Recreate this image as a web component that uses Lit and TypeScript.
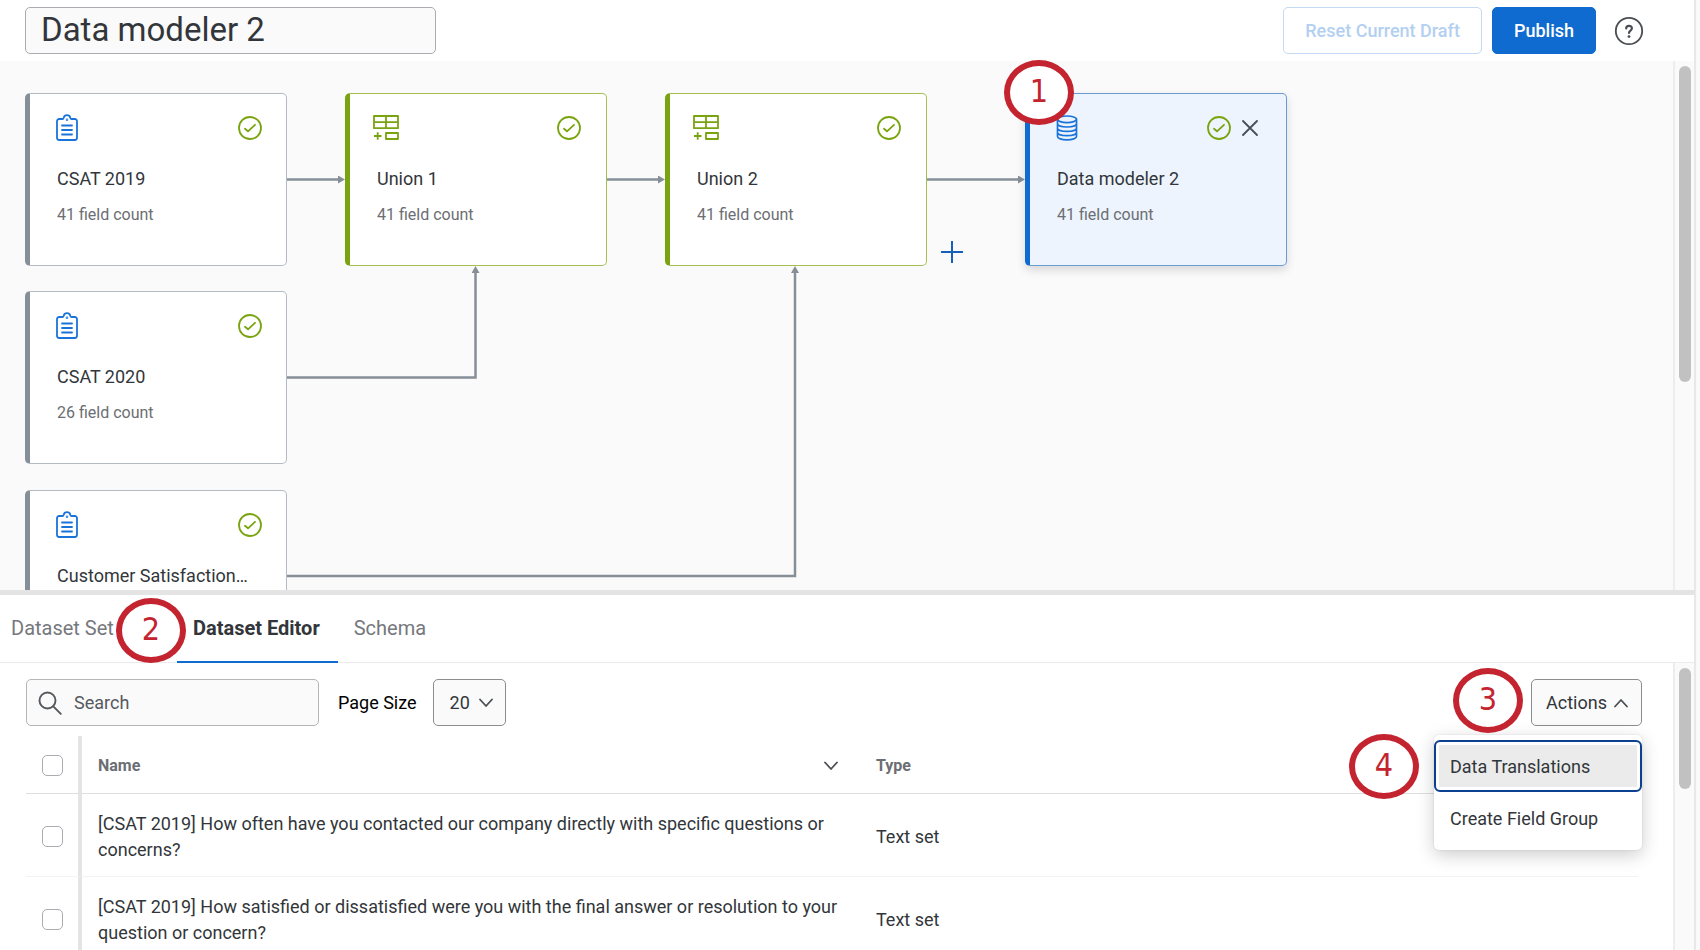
import { LitElement, html, css, svg, nothing } from "lit";
import { customElement, property, state } from "lit/decorators.js";
import { classMap } from "lit/directives/class-map.js";
import { styleMap } from "lit/directives/style-map.js";

type NodeKind = "survey" | "union" | "output";

interface FlowNode {
  name: string;
  fields: number;
  kind: NodeKind;
  x: number;
  y: number;
}

const NODES: FlowNode[] = [
  { name: "CSAT 2019", fields: 41, kind: "survey", x: 25, y: 32 },
  { name: "CSAT 2020", fields: 26, kind: "survey", x: 25, y: 230 },
  { name: "Customer Satisfaction…", fields: 41, kind: "survey", x: 25, y: 429 },
  { name: "Union 1", fields: 41, kind: "union", x: 345, y: 32 },
  { name: "Union 2", fields: 41, kind: "union", x: 665, y: 32 },
  { name: "Data modeler 2", fields: 41, kind: "output", x: 1025, y: 32 },
];

const LINKS = [
  "M287 118.500H340",
  "M607 118.500H660",
  "M927 118.500H1020",
  "M287 316.500H475.500V210",
  "M287 515H795V210",
];

const ROWS = [
  {
    name: "[CSAT 2019] How often have you contacted our company directly with specific questions or concerns?",
    type: "Text set",
  },
  {
    name: "[CSAT 2019] How satisfied or dissatisfied were you with the final answer or resolution to your question or concern?",
    type: "Text set",
  },
];

const surveyIcon = svg`<svg width="24" height="28" viewBox="0 0 24 28" fill="none" stroke="#1a73d9" stroke-width="1.8" stroke-linecap="round" stroke-linejoin="round" aria-hidden="true">
  <path d="M7.500 5H4.200A2.200 2.200 0 0 0 2 7.200V23.800A2.200 2.200 0 0 0 4.200 26H19.800A2.200 2.200 0 0 0 22 23.800V7.200A2.200 2.200 0 0 0 19.800 5H16.500C15.800 5 15.500 4.500 15.300 3.800A3.400 3.400 0 0 0 8.700 3.800C8.500 4.500 8.200 5 7.500 5Z"/>
  <path d="M7 11.500H17M7 16H17M7 20.500H17"/><circle cx="12" cy="5.800" r=".4"/></svg>`;

const unionIcon = svg`<svg width="26" height="28" viewBox="0 0 26 28" fill="none" stroke="#7aa310" stroke-width="1.8" stroke-linejoin="round" aria-hidden="true">
  <path d="M1 2H25V14.200H1ZM13 2V14.200M1 8.100H25M13 19H25V25H13ZM4.700 18.200V25.800M1 22H8.500"/></svg>`;

const outputIcon = svg`<svg width="22" height="28" viewBox="0 0 22 28" fill="none" stroke="#1a73d9" stroke-width="1.7" aria-hidden="true">
  <ellipse cx="11" cy="5.300" rx="9.500" ry="3.300"/>
  <path d="M1.500 5.300V22.500C1.500 24.300 5.700 25.800 11 25.800S20.500 24.300 20.500 22.500V5.300M1.500 9.800C1.500 11.600 5.700 13 11 13S20.500 11.600 20.500 9.800M1.500 14.200C1.500 16 5.700 17.400 11 17.400S20.500 16 20.500 14.200M1.500 18.500C1.500 20.300 5.700 21.700 11 21.700S20.500 20.300 20.500 18.500"/></svg>`;

const checkIcon = svg`<svg width="24" height="24" viewBox="0 0 24 24" fill="none" stroke="#7aa310" stroke-width="1.8" stroke-linecap="round" stroke-linejoin="round" role="img" aria-label="Valid">
  <circle cx="12" cy="12" r="11"/><path d="M7 12.800 10 15.300 17 8.800"/></svg>`;

const chevron = (up = false) => svg`<svg class="chev" width="16" height="10" viewBox="0 0 16 10" fill="none" stroke="#4a4e53" stroke-width="1.8" stroke-linecap="round" stroke-linejoin="round" aria-hidden="true">
  <path d=${up ? "M2 8.500 8 2 14 8.500" : "M2 1.500 8 8 14 1.500"}/></svg>`;

@customElement("flow-node")
class FlowNodeCard extends LitElement {
  @property({ attribute: false }) node!: FlowNode;

  static styles = css`
    :host { display: block; }
    .card {
      box-sizing: border-box;
      width: 262px;
      height: 173px;
      padding: 20px 24px 0 27px;
      border: 1px solid #b4bac1;
      border-left: 5px solid #868e98;
      border-radius: 5px;
      background: #fff;
    }
    .union { padding-right: 25px; border-color: #a3c050; border-left-color: #7aa310; }
    .output {
      border-color: #6a9bd1;
      border-left-color: #0f6bd0;
      background: #edf4fd;
      box-shadow: 0 4px 10px rgba(0, 0, 0, 0.14);
    }
    .top { display: flex; align-items: center; height: 28px; margin-left: -2px; }
    .grow { flex: 1; }
    .union .top { margin-left: -4px; }
    .output .top { margin-left: -1px; }
    .close {
      display: flex;
      margin-left: 11px;
      margin-right: 4px;
      padding: 0;
      border: 0;
      background: none;
    }
    .name {
      margin: 25px 0 0;
      font-size: 18px;
      font-weight: 400;
      line-height: 24px;
      color: #32363a;
      white-space: nowrap;
    }
    .count { margin: 12px 0 0; font-size: 16px; line-height: 24px; color: #6b6e73; }
  `;

  render() {
    const { name, fields, kind } = this.node;
    const icon = { survey: surveyIcon, union: unionIcon, output: outputIcon }[kind];
    return html`<article class="card ${kind}">
      <div class="top">
        ${icon}<span class="grow"></span>${checkIcon}
        ${kind === "output"
          ? html`<button class="close" aria-label="Remove">
              <svg width="16" height="16" viewBox="0 0 16 16" stroke="#4a4e53" stroke-width="1.800" stroke-linecap="round"><path d="M1 1 15 15M15 1 1 15" /></svg>
            </button>`
          : nothing}
      </div>
      <h3 class="name">${name}</h3>
      <p class="count">${fields} field count</p>
    </article>`;
  }
}

@customElement("step-marker")
class StepMarker extends LitElement {
  static styles = css`
    :host {
      box-sizing: border-box;
      display: flex;
      align-items: center;
      justify-content: center;
      width: 70px;
      height: 65px;
      padding-bottom: 4px;
      border: 6px solid #c32430;
      border-radius: 50%;
      background: #fff;
      color: #c32430;
      font: 400 32px/40px "DejaVu Sans Condensed", "DejaVu Sans", sans-serif;
    }
  `;
  render() {
    return html`<slot></slot>`;
  }
}

@customElement("app-root")
class AppRoot extends LitElement {
  @state() private tab = "Dataset Editor";
  @state() private menuOpen = true;

  static styles = css`
    :host {
      display: flex;
      height: 100vh;
      overflow: hidden;
      background: #fafafa;
      color: #32363a;
      font-family: Roboto, "Liberation Sans", sans-serif;
      font-size: 18px;
    }
    * { box-sizing: border-box; }
    button, input, select { font: inherit; color: inherit; }
    svg { flex: none; }

    .page {
      flex: 1;
      min-width: 0;
      display: flex;
      flex-direction: column;
      margin-right: 4px;
      border-right: 2px solid #e8e8e8;
      background: #fff;
    }
    .header {
      display: flex;
      align-items: center;
      gap: 10px;
      height: 61px;
      padding: 0 50px 0 25px;
    }
    .title {
      width: 411px;
      height: 47px;
      margin-right: auto;
      padding: 0 15px 2px;
      border: 1px solid #a9acb0;
      border-radius: 5px;
      background: #fafafa;
      font-size: 33px;
      line-height: 40px;
    }
    .btn {
      height: 47px;
      padding: 0 21px;
      border: 1px solid #c3d9f4;
      border-radius: 5px;
      background: #fff;
      color: #b3cff1;
      font-weight: 500;
    }
    .primary { border-color: #0f6bd0; background: #0f6bd0; color: #fff; }
    .help { display: flex; margin-left: 8px; padding: 0; border: 0; background: none; }

    .canvas { position: relative; display: flex; flex: none; height: 529px; background: #fafafa; }
    .board { position: relative; flex: 1; overflow: hidden; }
    .links { position: absolute; inset: 0; }
    .node { position: absolute; }
    .add { position: absolute; left: 941px; top: 180px; display: flex; padding: 0; border: 0; background: none; }
    .marker { position: absolute; z-index: 3; }
    .m1 { left: 1004px; top: -1px; }
    .m2 { left: 116px; top: 3px; }
    .m3 { right: calc(100% + 8px); top: -11px; }
    .m4 { right: calc(100% + 15px); top: -1px; }

    .track { width: 21px; border-left: 2px solid #ededed; padding: 5px 3px 0 4px; background: #fafafa; }
    .thumb { border-radius: 6px; background: #c1c1c1; }
    .tall { height: 316px; }
    .short { height: 121px; }
    .split { flex: none; height: 5px; background: #e4e4e4; }

    .tabs { position: relative; display: flex; flex: none; height: 68px; border-bottom: 1px solid #ececec; }
    .tab {
      margin-bottom: -1px;
      padding: 0 16px;
      border: 0;
      border-bottom: 2px solid transparent;
      background: none;
      font-size: 20px;
      color: #75787c;
    }
    .tab:first-child { padding-left: 11px; width: 177px; text-align: left; }
    .tab.on { padding-right: 18px; border-color: #0f6bd0; color: #32363a; font-weight: 700; }

    .editor { flex: 1; display: flex; min-height: 0; overflow: hidden; }
    .pane { flex: 1; min-width: 0; padding: 16px 35px 0 26px; }
    .tools { display: flex; align-items: center; height: 47px; }
    .search {
      display: flex;
      align-items: center;
      gap: 12px;
      width: 293px;
      height: 47px;
      padding: 0 11px;
      border: 1px solid #b4b6b9;
      border-radius: 5px;
      background: #fafafa;
    }
    .search input { min-width: 0; flex: 1; padding: 0; border: 0; background: none; outline: 0; }
    .search input::placeholder { color: #55595e; opacity: 1; }
    .sizelabel { margin: 0 16px 0 19px; color: #000; }
    .size { position: relative; display: flex; align-items: center; }
    .size select {
      width: 73px;
      height: 47px;
      padding: 0 16px;
      border: 1px solid #8b8e91;
      border-radius: 5px;
      background: #fafafa;
      appearance: none;
    }
    .size .chev { position: absolute; right: 12px; pointer-events: none; }
    .actions { position: relative; margin-left: auto; margin-right: -4px; }
    .actbtn {
      display: flex;
      align-items: center;
      justify-content: space-between;
      width: 111px;
      height: 47px;
      padding: 0 12px 0 14px;
      border: 1px solid #8b8e91;
      border-radius: 5px;
      background: #fafafa;
    }
    .menu {
      position: absolute;
      z-index: 2;
      right: 0;
      top: 56px;
      width: 208px;
      padding: 5px 0 6px;
      border-radius: 5px;
      background: #fff;
      box-shadow: 0 5px 18px rgba(0, 0, 0, 0.2), 0 0 2px rgba(0, 0, 0, 0.12);
    }
    .item {
      display: block;
      width: 100%;
      height: 52px;
      padding: 0 14px;
      border: 2px solid transparent;
      border-radius: 6px;
      background: none;
      text-align: left;
    }
    .item.focus { border-color: #0b4190; background: #ebebeb; box-shadow: inset 0 0 0 3px #fff; }

    table { width: 100%; margin-top: 10px; table-layout: fixed; border-spacing: 0; }
    .c-check { width: 56px; }
    .c-name { width: 778px; }
    th, td { padding: 3px 16px 0; text-align: left; border-bottom: 1px solid #f3f3f3; line-height: 26px; }
    th { height: 58px; padding-top: 2px; border-bottom-color: #dedede; font-size: 16px; font-weight: 700; color: #6b6e73; }
    td { height: 83px; }
    th:first-child, td:first-child { border-right: 4px solid #e4e4e4; padding: 2px 0 0 16px; }
    .sort { display: flex; align-items: center; justify-content: space-between; padding-right: 5px; }
    .tick {
      display: block;
      width: 21px;
      height: 21px;
      margin: 0;
      border: 1px solid #a9acb0;
      border-radius: 5px;
      background: #fff;
      appearance: none;
    }
  `;

  render() {
    return html`<div class="page">
      <header class="header">
        <input class="title" aria-label="Data modeler name" .value=${"Data modeler 2"} />
        <button class="btn">Reset Current Draft</button>
        <button class="btn primary">Publish</button>
        <button class="help" aria-label="Help">
          <svg width="30" height="30" viewBox="0 0 30 30" fill="none" stroke="#4a4e53" stroke-width="1.8">
            <circle cx="15" cy="15" r="13.200" />
            <path d="M12.200 12.400C12.200 9 17.900 9 17.900 12.300C17.900 14.600 15 14.500 15 17" stroke-width="2.200" stroke-linecap="round" />
            <circle cx="15" cy="20.600" r="1.400" fill="#4a4e53" stroke="none" />
          </svg>
        </button>
      </header>

      <section class="canvas">
        <div class="board">
          <svg class="links" width="100%" height="100%" fill="none" stroke="#868e98" stroke-width="2.500" aria-hidden="true">
            <defs>
              <marker id="tip" markerUnits="userSpaceOnUse" markerWidth="8" markerHeight="8" refX="2" refY="4" orient="auto">
                <path d="M0 0 7 4 0 8Z" fill="#868e98" stroke="none" />
              </marker>
            </defs>
            ${LINKS.map((d) => svg`<path d=${d} marker-end="url(#tip)"/>`)}
          </svg>
          ${NODES.map(
            (n) => html`<flow-node class="node" style=${styleMap({ left: `${n.x}px`, top: `${n.y}px` })} .node=${n}></flow-node>`
          )}
          <button class="add" aria-label="Add step">
            <svg width="22" height="22" viewBox="0 0 22 22" stroke="#1560b8" stroke-width="2"><path d="M11 0V22M0 11H22" /></svg>
          </button>
        </div>
        <div class="track"><div class="thumb tall"></div></div>
        <step-marker class="marker m1">1</step-marker>
      </section>
      <div class="split"></div>

      <nav class="tabs" role="tablist">
        ${["Dataset Set", "Dataset Editor", "Schema"].map(
          (t) => html`<button
            class=${classMap({ tab: true, on: t === this.tab })}
            role="tab"
            aria-selected=${t === this.tab}
            @click=${() => (this.tab = t)}
          >${t}</button>`
        )}
        <step-marker class="marker m2">2</step-marker>
      </nav>

      <section class="editor">
        <div class="pane">
          <div class="tools">
            <label class="search">
              <svg width="24" height="24" viewBox="0 0 24 24" fill="none" stroke="#55595e" stroke-width="1.900" stroke-linecap="round">
                <circle cx="9.500" cy="9.500" r="8" /><path d="M15.300 15.300 22.800 22.800" />
              </svg>
              <input type="text" placeholder="Search" aria-label="Search" />
            </label>
            <label class="sizelabel" for="size">Page Size</label>
            <div class="size">
              <select id="size"><option>20</option><option>50</option></select>
              ${chevron()}
            </div>
            <div class="actions">
              <button class="actbtn" aria-expanded=${this.menuOpen} @click=${() => (this.menuOpen = !this.menuOpen)}>
                Actions ${chevron(true)}
              </button>
              <step-marker class="marker m3">3</step-marker>
              ${this.menuOpen
                ? html`<div class="menu" role="menu">
                    <button class="item focus" role="menuitem">Data Translations</button>
                    <button class="item" role="menuitem">Create Field Group</button>
                    <step-marker class="marker m4">4</step-marker>
                  </div>`
                : nothing}
            </div>
          </div>
          <table>
            <colgroup><col class="c-check" /><col class="c-name" /><col /></colgroup>
            <thead>
              <tr>
                <th><input class="tick" type="checkbox" aria-label="Select all fields" /></th>
                <th><div class="sort">Name ${chevron()}</div></th>
                <th>Type</th>
              </tr>
            </thead>
            <tbody>
              ${ROWS.map(
                (r) => html`<tr>
                  <td><input class="tick" type="checkbox" aria-label=${r.name} /></td>
                  <td>${r.name}</td>
                  <td>${r.type}</td>
                </tr>`
              )}
            </tbody>
          </table>
        </div>
        <div class="track"><div class="thumb short"></div></div>
      </section>
    </div>`;
  }
}
